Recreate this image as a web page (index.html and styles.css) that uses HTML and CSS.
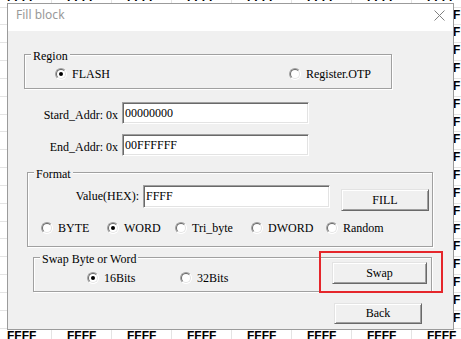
FILE: index.html
```html
<!DOCTYPE html>
<html>
<head>
<meta charset="utf-8">
<link rel="stylesheet" href="styles.css">
</head>
<body>
<div class="desk">
  <div class="sheet">
    <div class="row full"><span class="cell">FFFF</span><span class="cell">FFFF</span><span class="cell">FFFF</span><span class="cell">FFFF</span><span class="cell">FFFF</span><span class="cell">FFFF</span><span class="cell">FFFF</span><span class="cell">FFFF</span></div>
    <div class="row"><span class="tail">F</span></div>
    <div class="row"><span class="tail">F</span></div>
    <div class="row"><span class="tail">F</span></div>
    <div class="row"><span class="tail">F</span></div>
    <div class="row"><span class="tail">F</span></div>
    <div class="row"><span class="tail">F</span></div>
    <div class="row"><span class="tail">F</span></div>
    <div class="row"><span class="tail">F</span></div>
    <div class="row"><span class="tail">F</span></div>
    <div class="row"><span class="tail">F</span></div>
    <div class="row"><span class="tail">F</span></div>
    <div class="row"><span class="tail">F</span></div>
    <div class="row"><span class="tail">F</span></div>
    <div class="row"><span class="tail">F</span></div>
    <div class="row"><span class="tail">F</span></div>
    <div class="row"><span class="tail">F</span></div>
    <div class="row"><span class="tail">F</span></div>
    <div class="row"><span class="tail">F</span></div>
    <div class="row full"><span class="cell">FFFF</span><span class="cell">FFFF</span><span class="cell">FFFF</span><span class="cell">FFFF</span><span class="cell">FFFF</span><span class="cell">FFFF</span><span class="cell">FFFF</span><span class="cell">FFFF</span></div>
  </div>

  <div class="dialog">
    <div class="titlebar">
      <span class="title">Fill block</span>
      <svg class="close" width="11" height="11" viewBox="0 0 11 11"><path d="M0.5 0.5 L10.5 10.5 M10.5 0.5 L0.5 10.5" stroke="#808080" stroke-width="1" fill="none"/></svg>
    </div>
    <div class="client">
      <div class="group region">
        <span class="legend">Region</span>
        <div class="region-opts">
          <span class="opt"><span class="radio on"></span>FLASH</span>
          <span class="opt"><span class="radio"></span>Register.OTP</span>
        </div>
      </div>

      <div class="addr-row first">
        <span class="addr-label">Stard_Addr: 0x</span>
        <span class="field addr">00000000</span>
      </div>
      <div class="addr-row second">
        <span class="addr-label">End_Addr: 0x</span>
        <span class="field addr">00FFFFFF</span>
      </div>

      <div class="group format">
        <span class="legend">Format</span>
        <div class="value-row">
          <span class="value-label">Value(HEX):</span>
          <span class="field value">FFFF</span>
          <span class="btn fill">FILL</span>
        </div>
        <div class="format-opts">
          <span class="opt"><span class="radio"></span>BYTE</span>
          <span class="opt"><span class="radio on"></span>WORD</span>
          <span class="opt"><span class="radio"></span>Tri_byte</span>
          <span class="opt"><span class="radio"></span>DWORD</span>
          <span class="opt"><span class="radio"></span>Random</span>
        </div>
      </div>

      <div class="group swap">
        <span class="legend">Swap Byte or Word</span>
        <span class="opt bits16"><span class="radio on"></span>16Bits</span>
        <span class="opt bits32"><span class="radio"></span>32Bits</span>
        <span class="btn swap-btn">Swap</span>
      </div>

      <div class="back-row"><span class="btn back">Back</span></div>
    </div>
    <div class="highlight"></div>
  </div>
</div>
</body>
</html>
```

FILE: styles.css
```css
* { box-sizing: border-box; }

body {
  margin: 0;
  background: #ffffff;
}

.desk {
  position: relative;
  width: 461px;
  height: 339px;
  overflow: hidden;
  background: #ffffff;
}

/* background spreadsheet */
.sheet {
  width: 520px;
  margin-top: -11.35px;
  font: bold 12px/17.85px "Liberation Sans", Arial, sans-serif;
  color: #000;
}

.row {
  display: flex;
  height: 17.85px;
  white-space: nowrap;
  box-shadow: inset 0 1px 0 #e4e4e4;
}

.row.full {
  margin-left: -8px;
}

.cell {
  flex: none;
  width: 60px;
  padding-left: 15px;
  box-shadow: inset -1px 0 0 #e4e4e4;
}

.tail {
  flex: none;
  display: block;
  margin-left: 453px;
  width: 40px;
  color: #000;
  background: #ffffff;
  box-shadow: inset 0 1px 0 #e4e4e4;
}

/* dialog window */
.dialog {
  position: absolute;
  left: 7px;
  top: 3px;
  width: 447px;
  height: 327px;
  border: 1px solid #9b9b9b;
  background: #f0f0f0;
  display: flex;
  flex-direction: column;
}

.titlebar {
  flex: none;
  height: 27px;
  background: #ffffff;
  display: flex;
  align-items: flex-start;
  justify-content: space-between;
  padding: 3px 8px 0 8px;
}

.title {
  font: 12px/16px "Noto Sans", "Open Sans", sans-serif;
  color: #999999;
}

.close {
  display: block;
  margin-top: 3px;
}

.client {
  flex: 1;
  padding-top: 23px;
  font: 12px "Liberation Serif", "Times New Roman", serif;
  color: #000;
}

/* group boxes */
.group {
  position: relative;
  border: 1px solid #a0a0a0;
  box-shadow: inset 1px 1px 0 #ffffff, 1px 1px 0 #ffffff;
}

.legend {
  position: absolute;
  top: -6px;
  left: 6px;
  padding: 0 2px;
  line-height: 14px;
  background: #f0f0f0;
  white-space: nowrap;
}

.region {
  margin-left: 16px;
  width: 368px;
  height: 35px;
  padding-top: 12px;
}

.region-opts {
  display: grid;
  grid-template-columns: 234px auto;
  padding-left: 30px;
}

.opt {
  display: flex;
  align-items: center;
  height: 14px;
  line-height: 14px;
  white-space: nowrap;
}

.radio {
  position: relative;
  flex: none;
  width: 12px;
  height: 12px;
  margin-right: 5px;
  border-radius: 50%;
  border: 1px solid;
  border-color: #a0a0a0 #ffffff #ffffff #a0a0a0;
  background: #ffffff;
}

.radio::before {
  content: "";
  position: absolute;
  inset: 0;
  border-radius: 50%;
  border: 1px solid;
  border-color: #696969 #e3e3e3 #e3e3e3 #696969;
}

.radio.on::after {
  content: "";
  position: absolute;
  left: 3px;
  top: 3px;
  width: 4px;
  height: 4px;
  border-radius: 50%;
  background: #000;
}

/* address rows */
.addr-row {
  display: flex;
  align-items: flex-start;
  height: 22px;
}

.addr-row.first { margin-top: 13px; }
.addr-row.second { margin-top: 10px; }

.addr-label {
  width: 110px;
  margin-right: 4px;
  padding-top: 2px;
  line-height: 22px;
  text-align: right;
  white-space: nowrap;
}

.field {
  display: block;
  width: 187px;
  height: 22px;
  padding-left: 2px;
  line-height: 20px;
  background: #ffffff;
  border: 1px solid;
  border-color: #a0a0a0 #ffffff #ffffff #a0a0a0;
  box-shadow: inset 1px 1px 0 #696969, inset -1px -1px 0 #e3e3e3;
  white-space: nowrap;
}

/* format group */
.format {
  margin-top: 16px;
  margin-left: 19px;
  width: 406px;
  height: 75px;
  padding-top: 12px;
}

.value-row {
  display: flex;
  align-items: flex-start;
}

.value-label {
  width: 111px;
  margin-right: 4px;
  line-height: 23px;
  text-align: right;
  white-space: nowrap;
}

.field.value {
  height: 23px;
  line-height: 21px;
}

.btn {
  display: flex;
  align-items: center;
  justify-content: center;
  background: #f0f0f0;
  border: 1px solid;
  border-color: #e3e3e3 #696969 #696969 #e3e3e3;
  box-shadow: inset 1px 1px 0 #ffffff, inset -1px -1px 0 #a0a0a0;
  white-space: nowrap;
}

.fill {
  margin-left: 11px;
  margin-top: 4px;
  width: 88px;
  height: 22px;
}

.format-opts {
  display: grid;
  grid-template-columns: 66px 68px 76px 75px auto;
  margin-top: 10px;
  padding-left: 13px;
}

/* swap group */
.swap {
  margin-top: 10px;
  margin-left: 25px;
  width: 399px;
  height: 35px;
  display: flex;
  align-items: flex-start;
  padding: 4px 4px 0 0;
}

.bits16 {
  flex: none;
  width: 93px;
  margin-left: 53px;
  margin-top: 9px;
}

.bits32 {
  margin-top: 9px;
}

.swap-btn {
  margin-left: auto;
  width: 95px;
  height: 22px;
}

.back-row {
  display: flex;
  margin-top: 11px;
  padding-left: 326px;
}

.back {
  width: 88px;
  height: 21px;
}

/* red annotation frame */
.highlight {
  position: absolute;
  left: 311px;
  top: 247px;
  width: 124px;
  height: 42px;
  border: 2px solid #e5262b;
}
```
